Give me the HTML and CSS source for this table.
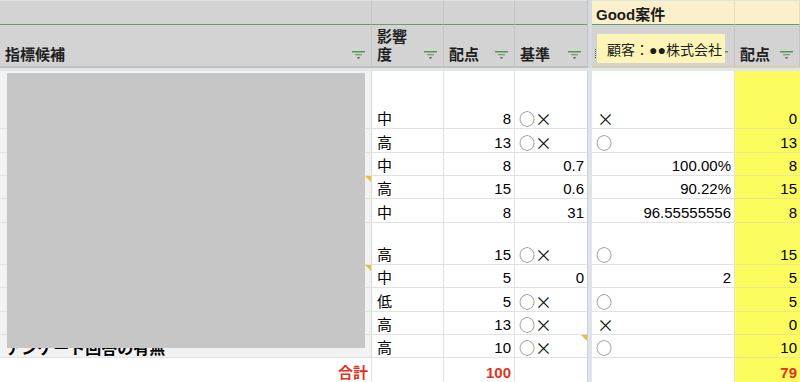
FILE: index.html
```html
<!DOCTYPE html>
<html lang="ja">
<head>
<meta charset="utf-8">
<title>指標候補</title>
<link rel="stylesheet" href="styles.css">
</head>
<body>
<div class="sheet">
  <!-- row 1 -->
  <div class="t1"></div><div class="t1"></div><div class="t1"></div><div class="t1 d"></div><div class="fz fzh"></div>
  <div class="t1 cream grp">Good案件</div><div class="t1 cream"></div>
  <!-- header row -->
  <div class="hd"><span>指標候補</span><svg class="fi" width="13" height="8" viewBox="0 0 13 8"><rect x="0" y="0" width="13" height="1.5" fill="#4f9a4f"/><rect x="3" y="3" width="7" height="1.3" fill="#72a072"/><rect x="5.5" y="6" width="2" height="1.6" fill="#4a5a4a"/></svg></div>
  <div class="hd"><span>影響<br>度</span><svg class="fi" width="13" height="8" viewBox="0 0 13 8"><rect x="0" y="0" width="13" height="1.5" fill="#4f9a4f"/><rect x="3" y="3" width="7" height="1.3" fill="#72a072"/><rect x="5.5" y="6" width="2" height="1.6" fill="#4a5a4a"/></svg></div>
  <div class="hd"><span>配点</span><svg class="fi" width="13" height="8" viewBox="0 0 13 8"><rect x="0" y="0" width="13" height="1.5" fill="#4f9a4f"/><rect x="3" y="3" width="7" height="1.3" fill="#72a072"/><rect x="5.5" y="6" width="2" height="1.6" fill="#4a5a4a"/></svg></div>
  <div class="hd d"><span>基準</span><svg class="fi" width="13" height="8" viewBox="0 0 13 8"><rect x="0" y="0" width="13" height="1.5" fill="#4f9a4f"/><rect x="3" y="3" width="7" height="1.3" fill="#72a072"/><rect x="5.5" y="6" width="2" height="1.6" fill="#4a5a4a"/></svg></div>
  <div class="fz fzh"></div>
  <div class="hd cream"><span class="stub"></span><svg class="fi" width="13" height="8" viewBox="0 0 13 8"><rect x="0" y="0" width="13" height="1.5" fill="#4f9a4f"/><rect x="3" y="3" width="7" height="1.3" fill="#72a072"/><rect x="5.5" y="6" width="2" height="1.6" fill="#4a5a4a"/></svg></div>
  <div class="hd cream"><span>配点</span><svg class="fi" width="13" height="8" viewBox="0 0 13 8"><rect x="0" y="0" width="13" height="1.5" fill="#4f9a4f"/><rect x="3" y="3" width="7" height="1.3" fill="#72a072"/><rect x="5.5" y="6" width="2" height="1.6" fill="#4a5a4a"/></svg></div>
  <!-- frozen divider -->
  <div class="fzrow"></div>

  <!-- data rows -->
  <div class="c a"></div><div class="c">中</div><div class="c r">8</div><div class="c d"><span class="o">○</span><span class="x">×</span></div><div class="fz"></div><div class="c"><span class="x">×</span></div><div class="c r y">0</div>

  <div class="c a"></div><div class="c">高</div><div class="c r">13</div><div class="c d"><span class="o">○</span><span class="x">×</span></div><div class="fz"></div><div class="c"><span class="o">○</span></div><div class="c r y">13</div>

  <div class="c a"></div><div class="c">中</div><div class="c r">8</div><div class="c r d">0.7</div><div class="fz"></div><div class="c r">100.00%</div><div class="c r y">8</div>

  <div class="c a note"></div><div class="c">高</div><div class="c r">15</div><div class="c r d">0.6</div><div class="fz"></div><div class="c r">90.22%</div><div class="c r y">15</div>

  <div class="c a"></div><div class="c">中</div><div class="c r">8</div><div class="c r d">31</div><div class="fz"></div><div class="c r">96.55555556</div><div class="c r y">8</div>

  <div class="c a"></div><div class="c">高</div><div class="c r">15</div><div class="c d"><span class="o">○</span><span class="x">×</span></div><div class="fz"></div><div class="c"><span class="o">○</span></div><div class="c r y">15</div>

  <div class="c a note"></div><div class="c">中</div><div class="c r">5</div><div class="c r d">0</div><div class="fz"></div><div class="c r">2</div><div class="c r y">5</div>

  <div class="c a"></div><div class="c">低</div><div class="c r">5</div><div class="c d"><span class="o">○</span><span class="x">×</span></div><div class="fz"></div><div class="c"><span class="o">○</span></div><div class="c r y">5</div>

  <div class="c a"></div><div class="c">高</div><div class="c r">13</div><div class="c d"><span class="o">○</span><span class="x">×</span></div><div class="fz"></div><div class="c"><span class="x">×</span></div><div class="c r y">0</div>

  <div class="c a atext">アンケート回答の有無</div><div class="c">高</div><div class="c r">10</div><div class="c d note"><span class="o">○</span><span class="x">×</span></div><div class="fz"></div><div class="c"><span class="o">○</span></div><div class="c r y">10</div>

  <!-- total row -->
  <div class="c r tot w">合計</div><div class="c w"></div><div class="c r tot w">100</div><div class="c d w"></div><div class="fz"></div><div class="c w"></div><div class="c r y tot">79</div>

  <div class="redact"></div>
  <div class="tip">顧客：●●株式会社</div>
</div>
</body>
</html>
```

FILE: styles.css
```css
* {
  box-sizing: border-box;
  margin: 0;
  padding: 0;
}

html, body {
  width: 800px;
  height: 382px;
  overflow: hidden;
  background: #fff;
}

body {
  font-family: "Liberation Sans", "Noto Sans CJK JP", sans-serif;
  font-size: 15px;
  color: #000;
}

.sheet {
  position: relative;
  display: grid;
  grid-template-columns: 372px 72px 71px 72px 5px 143px 65px;
  grid-template-rows: 25px 43px 3px 58px 24px 23px 23px 24px 42px 23px 24px 23px 23px 24px;
  width: 800px;
  height: 382px;
}

/* top group row */
.t1 {
  background: #d3d3d3;
  border-top: 1px solid #dbe7d9;
  border-right: 1px solid #c5c5c5;
  border-bottom: 1px solid #6c9e6a;
  display: flex;
  align-items: flex-end;
  padding: 0 4px 0 4px;
  line-height: 18px;
}

.t1.d { border-right: none; }

.cream {
  background: #fcf0cc;
  border-right-color: #e8ddb8;
}

.grp {
  font-weight: bold;
  color: #1c1c1c;
}

/* header row */
.hd {
  background: #d3d3d3;
  border-right: 1px solid #c5c5c5;
  border-bottom: 2px solid #c0c0c0;
  display: flex;
  align-items: flex-end;
  justify-content: space-between;
  padding: 0 6px 2px 5px;
  font-weight: bold;
  line-height: 18px;
  color: #1f1f1f;
  white-space: nowrap;
  overflow: hidden;
}

.hd.d { border-right: none; }
.hd.cream { border-bottom-color: #d9cfae; }

.stub {
  display: block;
  width: 2px;
  height: 9px;
  margin: 0 0 6px -2px;
  border-left: 1px dotted #555;
}

.fi {
  flex: none;
  margin-bottom: 5px;
}

/* frozen dividers */
.fz {
  background: #dfe3ea;
  border-left: 1px solid #cdd1d8;
}

.fzh {
  background: #d6d9df;
  border-left-color: #c2c2c2;
}

.fzrow {
  grid-column: 1 / -1;
  background: #e1e5ec;
}

/* data cells */
.c {
  position: relative;
  display: flex;
  align-items: flex-end;
  padding: 0 3px 1px 5px;
  line-height: 17px;
  white-space: nowrap;
  border-right: 1px solid #e2e2e2;
  border-bottom: 1px solid #e2e2e2;
}

.c.r { justify-content: flex-end; }
.c.d { border-right: none; }

.a {
  background: #f2f2f2;
  border-right-color: #d8d8d8;
}

.atext {
  font-weight: bold;
  font-size: 16px;
  padding-left: 6px;
  padding-bottom: 0;
}

.y {
  background: #fdfc5f;
  border-right: none;
  border-bottom-color: #e9e88c;
}

.w { border-bottom: none; }
.y.tot { border-bottom: none; }

.tot {
  color: #e2321e;
  font-weight: bold;
}

.o {
  font-family: "Noto Sans CJK JP", sans-serif;
  font-size: 16px;
  color: #5a5a5a;
  font-weight: 300;
  margin-left: -1px;
}

.x {
  font-family: "Noto Sans CJK JP", sans-serif;
  font-size: 17px;
  color: #111;
}

.note::after {
  content: "";
  position: absolute;
  top: 0;
  right: 0;
  border-top: 6px solid #e6bd3f;
  border-left: 6px solid transparent;
}

/* overlays */
.redact {
  position: absolute;
  left: 7px;
  top: 73px;
  width: 358px;
  height: 275px;
  background: #c6c6c6;
}

.tip {
  position: absolute;
  left: 597px;
  top: 34px;
  width: 128px;
  height: 29px;
  background: #fdf4b8;
  display: flex;
  align-items: center;
  padding-left: 10px;
  font-size: 14px;
  color: #1c1c1c;
  white-space: nowrap;
}
```
